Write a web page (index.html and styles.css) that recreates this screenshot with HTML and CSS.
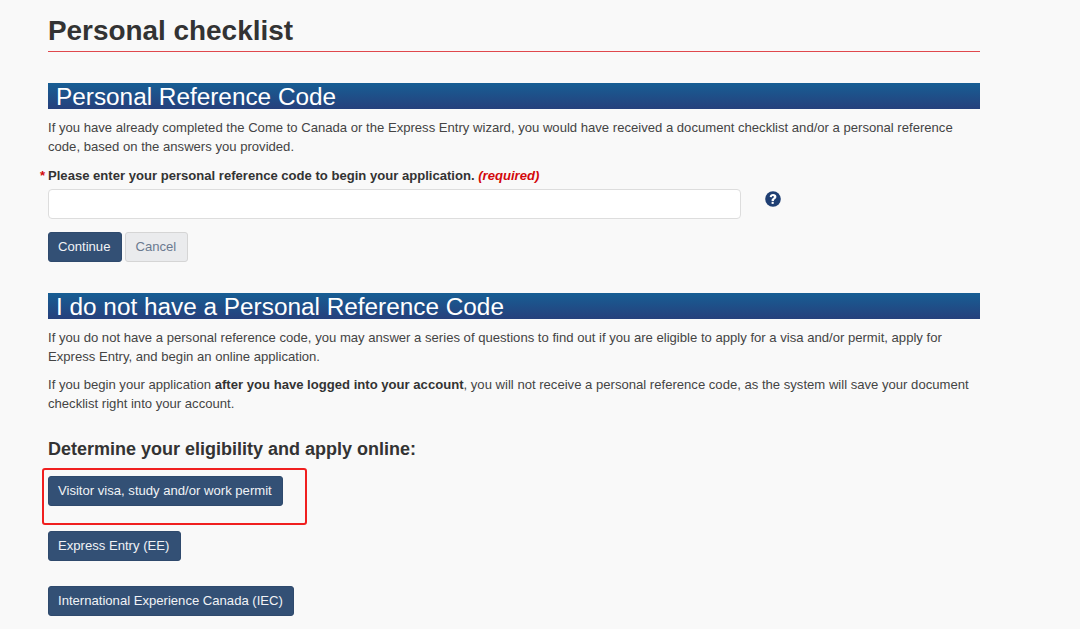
FILE: index.html
```html
<!DOCTYPE html>
<html lang="en">
<head>
<meta charset="utf-8">
<title>Personal checklist</title>
<link rel="stylesheet" href="styles.css">
</head>
<body>
<main class="page">
  <h1 class="title">Personal checklist</h1>

  <h2 class="band">Personal Reference Code</h2>
  <p class="copy">If you have already completed the Come to Canada or the Express Entry wizard, you would have received a document checklist and/or a personal reference code, based on the answers you provided.</p>

  <label class="field-label" for="code"><span class="star">*</span>Please enter your personal reference code to begin your application. <em class="req">(required)</em></label>
  <div class="field-row">
    <input class="field" id="code" type="text">
    <svg class="help" viewBox="0 0 16 16" aria-hidden="true">
      <circle cx="8" cy="8" r="7.8" fill="#1f3f73"/>
      <path d="M4.7 6C4.8 4.1 6.2 3 8.1 3c1.9 0 3.3 1.1 3.3 2.7 0 1.3-.7 2-1.6 2.6-.6.4-.8.7-.8 1.3v.3H6.6v-.5c0-1.1.4-1.7 1.2-2.2.7-.5 1-.8 1-1.3S8.600 5 8 5s-1.100.4-1.200 1.200z" fill="#fff"/>
      <rect x="6.600" y="10.800" width="2.100" height="2.100" fill="#fff"/>
    </svg>
  </div>
  <div class="actions">
    <button class="btn btn-wide" type="button">Continue</button>
    <button class="btn btn-wide btn-muted" type="button">Cancel</button>
  </div>

  <h2 class="band">I do not have a Personal Reference Code</h2>
  <p class="copy">If you do not have a personal reference code, you may answer a series of questions to find out if you are eligible to apply for a visa and/or permit, apply for Express Entry, and begin an online application.</p>
  <p class="copy copy-next">If you begin your application <strong>after you have logged into your account</strong>, you will not receive a personal reference code, as the system will save your document checklist right into your account.</p>

  <h3 class="subhead">Determine your eligibility and apply online:</h3>
  <div class="stack">
    <div class="highlighted"><button class="btn" type="button">Visitor visa, study and/or work permit</button></div>
    <button class="btn btn-wide" type="button">Express Entry (EE)</button>
    <button class="btn" type="button">International Experience Canada (IEC)</button>
  </div>
</main>
</body>
</html>
```
FILE: styles.css
```css
*, *::after { box-sizing: border-box; }
html, body { margin: 0; height: 100%; }
body {
  background: #f9f9f9;
  color: #333;
  font-family: "Liberation Sans", Arial, sans-serif;
  overflow: hidden;
}
.page { width: 932px; margin-left: 48px; padding-top: 15px; }
.title {
  margin: 0;
  font-size: 27.9px;
  line-height: 32px;
  height: 37px;
  font-weight: 700;
  color: #333;
  border-bottom: 1px solid #e0484d;
}
.band {
  margin: 31px 0 0;
  height: 26px;
  padding-left: 8px;
  font-size: 24.35px;
  line-height: 27px;
  font-weight: 400;
  color: #fff;
  background: linear-gradient(#175e94, #26407c);
}
.copy {
  margin: 9px 0 0;
  font-size: 13.1px;
  line-height: 19px;
  color: #444;
}
.copy-next { margin-top: 9px; }
.copy strong { color: #333; }
.field-label {
  position: relative;
  display: block;
  margin-top: 10px;
  font-size: 13.08px;
  line-height: 19px;
  font-weight: 700;
  color: #333;
}
.star {
  position: absolute;
  left: -8px;
  top: 0;
  color: #d3080c;
}
.req { color: #d3080c; }
.field-row { display: flex; align-items: flex-start; margin-top: 4px; }
.field {
  width: 693px;
  height: 30px;
  background: #fff;
  border: 1px solid #ddd;
  border-radius: 4px;
}
.help { width: 16px; height: 16px; margin: 2px 0 0 24px; }
.actions { display: flex; gap: 3px; margin-top: 13px; }
.btn {
  display: block;
  height: 30px;
  padding: 0 10px 2px 9px;
  font-family: "Liberation Sans", Arial, sans-serif;
  font-size: 13.1px;
  color: #f1f3f6;
  background: #335075;
  border: 1px solid #2f4a6d;
  border-radius: 3px;
}
.btn-wide { padding-right: 11px; }
.btn-muted {
  color: #6b7a90;
  background: #eaebed;
  border-color: #d5d5d5;
}
.subhead {
  margin: 25px 0 0;
  font-size: 18px;
  line-height: 22px;
  font-weight: 700;
  color: #333;
}
.stack { display: flex; flex-direction: column; align-items: flex-start; margin-top: 16px; }
.stack > .btn { margin-top: 25px; }
.highlighted { position: relative; }
.highlighted::after {
  content: "";
  position: absolute;
  left: -6px;
  top: -8px;
  width: 265px;
  height: 57px;
  border: 2px solid #f01f1f;
  border-radius: 3px;
}
```
